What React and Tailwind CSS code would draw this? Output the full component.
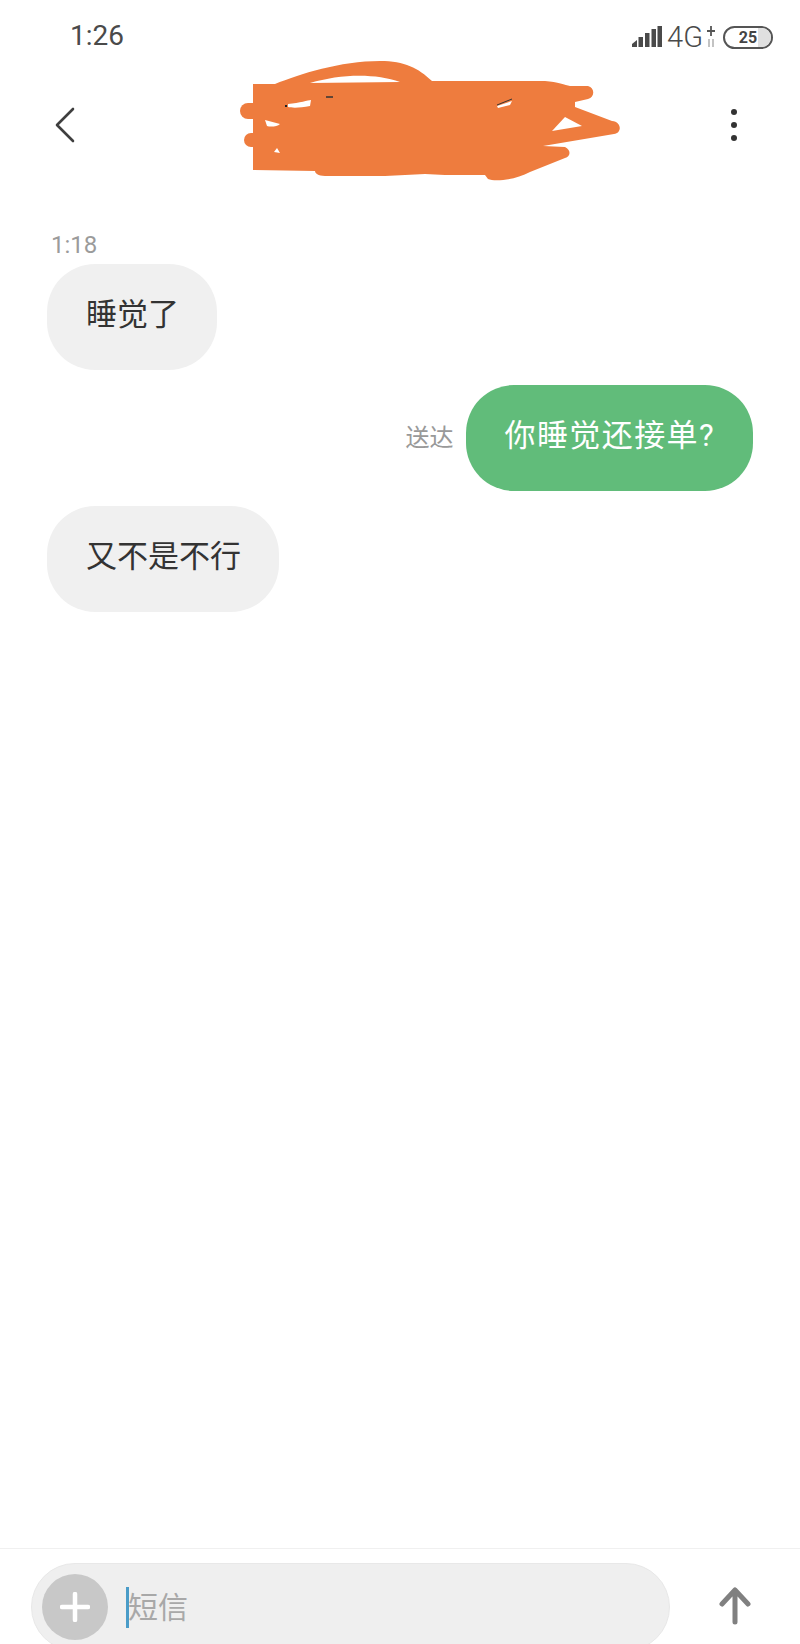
import React from "react";

const CJK = "font-['Roboto','Noto_Sans_CJK_SC',sans-serif]";

function Redaction() {
  return (
    <svg width="800" height="200" viewBox="0 0 800 200" className="absolute left-0 top-0" aria-hidden="true">
      <g fill="#ee7c3e" stroke="none">
        <path d="M253 84 L275 84 C300 74 340 61 380 61 C405 61 418 68 432 81 L545 81 C558 82 565 85 570 86 L588 86 C595 88 595 97 588 99 L575 102 L575 107 L612 121 C622 122 622 133 614 134 L543 146 L565 147 C571 150 571 156 565 158 L530 172 C515 180 495 182 488 179 L485 175 L445 175 L425 174 L385 176 L325 176 C318 176 315 173 315 171 L253 170 Z" />
        <path d="M248 103 a8 8 0 1 0 0 16 L262 119 L262 103 Z" />
        <path d="M251 133 a7 7 0 1 0 0 14 L262 147 L262 133 Z" />
        <path fill="#fff" d="M288 104 C300 103 308 100 311 100 L310 106 C300 108 292 108 288 107 Z" />
        <path fill="#fff" d="M265 120 L280 124 C277 127 270 127 267 126 Z" />
        <path fill="#fff" d="M274 152 L280 153 L277 148 Z" />
        <path fill="#fff" d="M310 83 C340 74 375 73 400 82 Z" />
        <path fill="#fff" d="M552 131 L565 117 L582 126 Z" />
        <path fill="#fff" d="M497 106 L512 101 L510 105 L498 108 Z" />
      </g>
      <path d="M285 106 h2" stroke="#222" strokeWidth="2" />
      <path d="M326 97 h7" stroke="#333" strokeWidth="1.5" />
      <path d="M497 105 L512 99" stroke="#333" strokeWidth="1" />
    </svg>
  );
}

function Signal() {
  return (
    <svg width="30" height="22" viewBox="0 0 30 22" aria-hidden="true">
      <g fill="#4a4a4a">
        <path d="M0 18 l5 -4 v7 h-5z" />
        <rect x="6.5" y="11" width="4.5" height="10" />
        <rect x="13" y="7" width="4.5" height="14" />
        <rect x="19.5" y="3" width="4.5" height="18" />
        <rect x="25.5" y="0" width="4.5" height="21" />
      </g>
    </svg>
  );
}

function StatusBar() {
  return (
    <div className="flex h-[72px] items-start justify-between pl-[70px] pr-[27px] pt-[18px] text-[#4a4a4a]">
      <span className="text-[28px] leading-[36px] font-['Roboto',sans-serif]">1:26</span>
      <div className="mt-[5px] flex items-center">
        <Signal />
        <span className="ml-[5px] text-[29px] leading-[28px] font-['Roboto',sans-serif] font-light">4G</span>
        <svg width="10" height="22" viewBox="0 0 10 22" className="ml-[3px]" aria-hidden="true">
          <path d="M5 0 v10 M1 5 h8" stroke="#555" strokeWidth="1.8" />
          <path d="M3 13 v8 M7 13 v8" stroke="#aaa" strokeWidth="1.4" />
        </svg>
        <div className="relative ml-[7px] h-[23px] w-[50px] overflow-hidden rounded-full border-2 border-[#555] bg-white">
          <div className="absolute inset-y-0 right-0 w-[13px] bg-[#e0e0e0]" />
          <span className="absolute inset-0 text-center text-[16px] leading-[19px] font-bold text-[#444] font-['Roboto',sans-serif]">25</span>
        </div>
      </div>
    </div>
  );
}

function Header() {
  return (
    <div className="flex h-[106px] items-center justify-between pl-[55px] pr-[63px]">
      <svg width="20" height="36" viewBox="0 0 20 36" aria-hidden="true">
        <path d="M18 2 L2 18 L18 34" fill="none" stroke="#3f3f3f" strokeWidth="2.6" strokeLinecap="round" strokeLinejoin="round" />
      </svg>
      <div className="flex flex-col gap-[7px]">
        <span className="h-[6px] w-[6px] rounded-full bg-[#333]" />
        <span className="h-[6px] w-[6px] rounded-full bg-[#333]" />
        <span className="h-[6px] w-[6px] rounded-full bg-[#333]" />
      </div>
    </div>
  );
}

function Bubble({ children, className }) {
  return (
    <div className={"flex h-[106px] items-center rounded-[48px] pl-[39px] pr-[38px] pb-[5px] text-[31px] leading-[40px] " + className}>
      {children}
    </div>
  );
}

export default function App() {
  return (
    <div className={"relative h-[1644px] w-[800px] overflow-hidden bg-white " + CJK}>
      <StatusBar />
      <Header />
      <Redaction />
      <main className="px-[47px] pt-[51px]">
        <div className="ml-[4px] text-[24px] leading-[32px] text-[#9b9b9b]">1:18</div>
        <div className="mt-[3px] flex">
          <Bubble className="bg-[#f0f0f0] text-[#333]">睡觉了</Bubble>
        </div>
        <div className="mt-[15px] flex items-center justify-end">
          <span className="mr-[12px] text-[24px] leading-[32px] text-[#999999]">送达</span>
          <Bubble className="bg-[#61bc7a] tracking-[1.4px] text-white">你睡觉还接单?</Bubble>
        </div>
        <div className="mt-[15px] flex">
          <Bubble className="bg-[#f0f0f0] text-[#333]">又不是不行</Bubble>
        </div>
      </main>
      <footer className="absolute inset-x-0 top-[1548px] h-[96px] border-t border-[#f0f0f0]">
        <div className="flex items-start pl-[31px] pt-[14px]">
          <div className="flex h-[88px] w-[639px] shrink-0 items-center rounded-[44px] border border-[#e8e8e8] bg-[#efefef] pl-[10px]">
            <div className="flex h-[66px] w-[66px] items-center justify-center rounded-full bg-[#c8c8c8]">
              <svg width="30" height="30" viewBox="0 0 30 30" aria-hidden="true">
                <path d="M15 2 V28 M2 15 H28" stroke="#fff" strokeWidth="4.5" strokeLinecap="round" />
              </svg>
            </div>
            <div className="ml-[18px] flex items-center">
              <span className="h-[41px] w-[3px] bg-[#4a9cc8]" />
              <span className="ml-[-1px] pt-[2px] text-[30px] leading-[40px] text-[#a8a8a8]">短信</span>
            </div>
          </div>
          <svg width="32" height="38" viewBox="0 0 32 38" className="ml-[49px] mt-[24px]" aria-hidden="true">
            <path d="M16 3 V35 M3 17 L16 3 L29 17" fill="none" stroke="#808080" strokeWidth="5" strokeLinecap="round" strokeLinejoin="round" />
          </svg>
        </div>
      </footer>
    </div>
  );
}
